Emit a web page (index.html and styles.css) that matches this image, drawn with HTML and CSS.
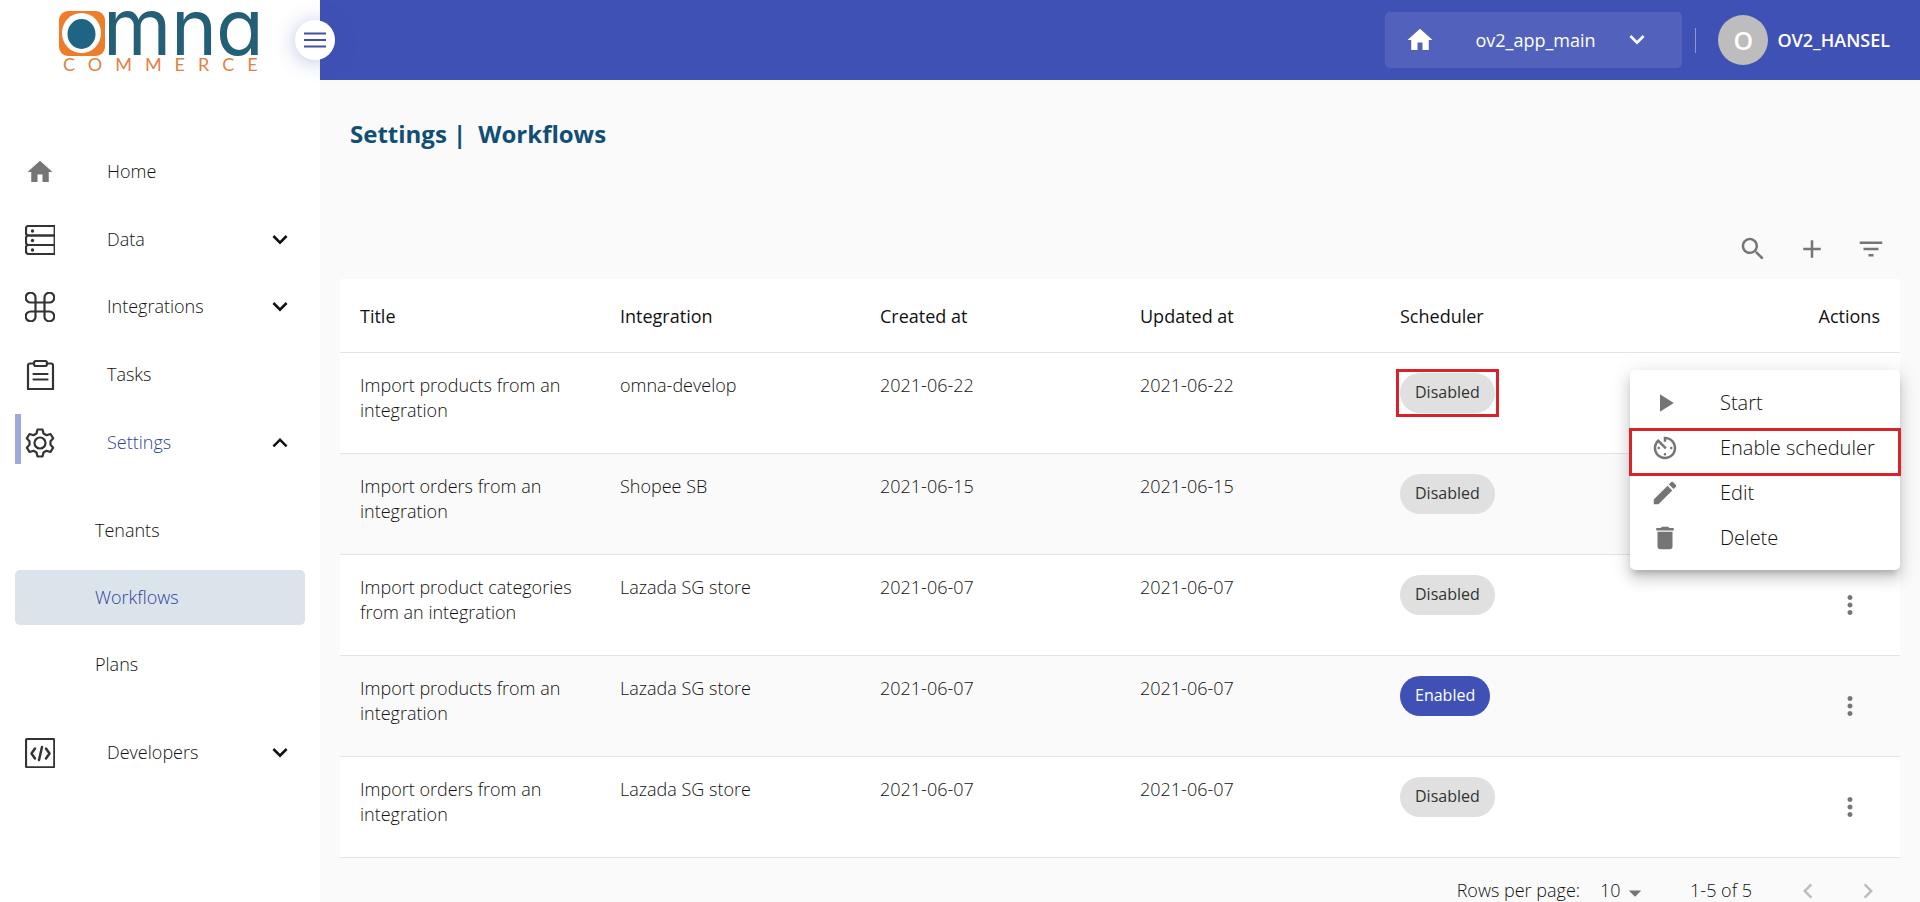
FILE: index.html
```html
<!DOCTYPE html>
<html lang="en">
<head>
<meta charset="utf-8">
<title>Settings | Workflows</title>
<link rel="stylesheet" href="styles.css">
</head>
<body>
<svg class="sprite" aria-hidden="true">
  <symbol id="home" viewBox="0 0 24 24"><path d="M10 20v-6h4v6h5v-8h3L12 3 2 12h3v8z"/></symbol>
  <symbol id="down" viewBox="0 0 24 24"><path d="M7.41 8.09 12 12.67l4.59-4.58L18 9.5l-6 6-6-6z"/></symbol>
  <symbol id="up" viewBox="0 0 24 24"><path d="M7.41 15.41 12 10.83l4.59 4.58L18 14l-6-6-6 6z"/></symbol>
  <symbol id="more" viewBox="0 0 24 24"><path d="M12 8c1.100 0 2-.9 2-2s-.9-2-2-2-2 .9-2 2 .9 2 2 2zm0 2c-1.100 0-2 .9-2 2s.9 2 2 2 2-.9 2-2-.9-2-2-2zm0 6c-1.100 0-2 .9-2 2s.9 2 2 2 2-.9 2-2-.9-2-2-2z"/></symbol>
</svg>
<div class="app">
  <aside class="sidebar">
    <div class="brand">
      <svg class="logo" viewBox="0 0 202 62" role="img" aria-label="omna commerce">
        <rect x="0" y="1" width="46" height="45" rx="9" fill="#ee7d2b"/>
        <ellipse cx="22.500" cy="23" rx="19.500" ry="20" fill="#fff"/>
        <ellipse cx="22.500" cy="24" rx="14" ry="15" fill="#1f6583"/>
        <text class="logo-name" x="44 112 157" y="45">mna</text>
        <text class="logo-sub" x="4" y="61">COMMERCE</text>
      </svg>
    </div>
    <nav class="nav">
      <a class="nav-item" href="#"><svg class="icon muted"><use href="#home"/></svg><span>Home</span></a>
      <button class="nav-item" type="button">
        <svg class="icon line" viewBox="0 0 30 30"><rect x="1" y="1" width="30" height="9.500" rx="2.500"/><rect x="1" y="10.500" width="30" height="9.500" rx="2.500"/><rect x="1" y="20" width="30" height="9" rx="2.500"/><path d="M29.300 2v27" stroke-width="1.400"/><g class="dot"><circle cx="7.500" cy="6" r="1.700"/><circle cx="7.500" cy="15.500" r="1.700"/><circle cx="7.500" cy="25" r="1.700"/></g></svg>
        <span>Data</span><svg class="icon chevron"><use href="#down"/></svg></button>
      <button class="nav-item" type="button">
        <svg class="icon line" viewBox="0 0 30 30"><path d="M10.500 10.500H6A4.900 4.900 0 1 1 10.500 6v18A4.900 4.900 0 1 1 6 19.500h18.500a4.900 4.900 0 1 1-5 4.500V6a4.900 4.900 0 1 1 5 4.500z"/></svg>
        <span>Integrations</span><svg class="icon chevron"><use href="#down"/></svg></button>
      <a class="nav-item" href="#">
        <svg class="icon line" viewBox="0 0 30 30"><path d="M9 3.500H5a2 2 0 0 0-2 2V29h25V5.500a2 2 0 0 0-2-2h-4"/><rect x="9" y="1" width="13" height="5" rx="2"/><path d="M8.500 14h14M8.500 19.500h14"/></svg>
        <span>Tasks</span></a>
      <button class="nav-item current" type="button">
        <svg class="icon line" viewBox="0 0 30 30"><path d="M12.500 1.500h5l1 4 3 1.700 4-1.200 2.700 4.300-2.700 3v3.400l2.700 3-2.700 4.300-4-1.200-3 1.700-1 4h-5l-1-4-3-1.700-4 1.200-2.700-4.300 2.700-3v-3.400l-2.700-3L4.500 6l4 1.200 3-1.700z"/><circle cx="15" cy="15" r="5.500"/></svg>
        <span>Settings</span><svg class="icon chevron"><use href="#up"/></svg></button>
      <div class="subnav">
        <a class="sub-item" href="#">Tenants</a>
        <a class="sub-item selected" href="#">Workflows</a>
        <a class="sub-item" href="#">Plans</a>
      </div>
      <button class="nav-item" type="button">
        <svg class="icon line" viewBox="0 0 30 30"><rect x="1" y="1" width="28.300" height="28.300" rx="1.500"/><path stroke-width="2.500" d="M10 10.500 6.500 15.500l3.500 5M21 10.500l3.500 5-3.500 5M17 9l-3 13"/></svg>
        <span>Developers</span><svg class="icon chevron"><use href="#down"/></svg></button>
    </nav>
    <button class="menu-toggle" type="button" aria-label="Toggle menu"><svg viewBox="0 0 24 18"><path d="M1 2.500h22M1 9h22M1 15.500h22"/></svg></button>
  </aside>
  <div class="page">
    <header class="topbar">
      <button class="app-select" type="button"><svg class="icon"><use href="#home"/></svg><span class="app-name">ov2_app_main</span><svg class="icon"><use href="#down"/></svg></button>
      <div class="divider"></div>
      <div class="user"><span class="avatar">O</span><span>OV2_HANSEL</span></div>
    </header>
    <main class="content">
      <h1 class="title"><span>Settings |</span><span>Workflows</span></h1>
      <div class="toolbar">
        <button class="icon-button" type="button" aria-label="Search"><svg class="icon" viewBox="0 0 24 24"><path d="M15.500 14h-.79l-.28-.27C15.410 12.590 16 11.110 16 9.500 16 5.910 13.090 3 9.500 3S3 5.910 3 9.500 5.910 16 9.500 16c1.610 0 3.090-.59 4.230-1.570l.27.28v.79l5 4.990L20.490 19l-4.990-5zm-6 0C7.010 14 5 11.990 5 9.500S7.010 5 9.500 5 14 7.010 14 9.500 11.990 14 9.500 14z"/></svg></button>
        <button class="icon-button" type="button" aria-label="Add"><svg class="icon" viewBox="0 0 24 24"><path d="M19 13h-6v6h-2v-6H5v-2h6V5h2v6h6v2z"/></svg></button>
        <button class="icon-button" type="button" aria-label="Filter"><svg class="icon" viewBox="0 0 24 24"><path d="M10 18h4v-2h-4v2zM3 6v2h18V6H3zm3 7h12v-2H6v2z"/></svg></button>
      </div>
      <table class="table">
        <thead><tr><th>Title</th><th>Integration</th><th>Created at</th><th>Updated at</th><th>Scheduler</th><th class="end">Actions</th></tr></thead>
        <tbody>
          <tr><td>Import products from an integration</td><td>omna-develop</td><td>2021-06-22</td><td>2021-06-22</td><td><span class="chip marked">Disabled</span></td>
            <td class="end"><div class="actions"><button class="more-button" type="button" aria-label="Actions"><svg class="icon"><use href="#more"/></svg></button>
              <div class="menu" role="menu">
                <button class="menu-item" type="button" role="menuitem"><svg class="icon" viewBox="0 0 24 24"><path d="M8 5v14l11-7z"/></svg>Start</button>
                <button class="menu-item marked" type="button" role="menuitem"><svg class="icon" viewBox="0 0 24 24"><path d="M11 17c0 .55.45 1 1 1s1-.45 1-1-.45-1-1-1-1 .45-1 1zm0-14v4h2V5.080c3.390.49 6 3.390 6 6.920 0 3.870-3.130 7-7 7s-7-3.130-7-7c0-1.680.59-3.220 1.580-4.420L12 13l1.410-1.410-6.800-6.800v.02C4.420 6.450 3 9.050 3 12c0 4.970 4.020 9 9 9 4.970 0 9-4.030 9-9s-4.030-9-9-9h-1zm7 9c0-.55-.45-1-1-1s-1 .45-1 1 .45 1 1 1 1-.45 1-1zM6 12c0 .55.45 1 1 1s1-.45 1-1-.45-1-1-1-1 .45-1 1z"/></svg>Enable scheduler</button>
                <button class="menu-item" type="button" role="menuitem"><svg class="icon" viewBox="0 0 24 24"><path d="M3 17.250V21h3.750L17.810 9.940l-3.750-3.750L3 17.250zM20.710 7.040c.39-.39.39-1.020 0-1.410l-2.340-2.340c-.39-.39-1.020-.39-1.410 0l-1.830 1.830 3.750 3.750 1.830-1.830z"/></svg>Edit</button>
                <button class="menu-item" type="button" role="menuitem"><svg class="icon" viewBox="0 0 24 24"><path d="M6 19c0 1.100.9 2 2 2h8c1.100 0 2-.9 2-2V7H6v12zM19 4h-3.500l-1-1h-5l-1 1H5v2h14V4z"/></svg>Delete</button>
              </div></div></td></tr>
          <tr><td>Import orders from an integration</td><td>Shopee SB</td><td>2021-06-15</td><td>2021-06-15</td><td><span class="chip">Disabled</span></td><td class="end"><button class="more-button" type="button" aria-label="Actions"><svg class="icon"><use href="#more"/></svg></button></td></tr>
          <tr><td>Import product categories from an integration</td><td>Lazada SG store</td><td>2021-06-07</td><td>2021-06-07</td><td><span class="chip">Disabled</span></td><td class="end"><button class="more-button" type="button" aria-label="Actions"><svg class="icon"><use href="#more"/></svg></button></td></tr>
          <tr><td>Import products from an integration</td><td>Lazada SG store</td><td>2021-06-07</td><td>2021-06-07</td><td><span class="chip on">Enabled</span></td><td class="end"><button class="more-button" type="button" aria-label="Actions"><svg class="icon"><use href="#more"/></svg></button></td></tr>
          <tr><td>Import orders from an integration</td><td>Lazada SG store</td><td>2021-06-07</td><td>2021-06-07</td><td><span class="chip">Disabled</span></td><td class="end"><button class="more-button" type="button" aria-label="Actions"><svg class="icon"><use href="#more"/></svg></button></td></tr>
        </tbody>
      </table>
      <div class="pagination">
        <label for="rows">Rows per page:</label>
        <div class="rows"><select id="rows"><option>10</option><option>25</option></select><svg class="icon caret" viewBox="0 0 24 24"><path d="M7 10l5 5 5-5z"/></svg></div>
        <span class="range">1-5 of 5</span>
        <button class="pager" type="button" disabled aria-label="Previous page"><svg class="icon" viewBox="0 0 24 24"><path d="M15.410 7.410 14 6l-6 6 6 6 1.410-1.410L10.830 12z"/></svg></button>
        <button class="pager" type="button" disabled aria-label="Next page"><svg class="icon" viewBox="0 0 24 24"><path d="M10 6 8.590 7.410 13.170 12l-4.580 4.590L10 18l6-6z"/></svg></button>
      </div>
    </main>
  </div>
</div>
</body>
</html>
```
FILE: styles.css
```css
* { box-sizing: border-box; }
body {
  margin: 0;
  font: 300 18px/25px "Open Sans", "Noto Sans", sans-serif;
  color: #111;
  background: #fafafa;
}
button, select { font: inherit; color: inherit; border: 0; background: none; padding: 0; margin: 0; cursor: pointer; }
a { color: inherit; text-decoration: none; }
.sprite { display: none; }
.icon { width: 30px; height: 30px; flex: none; fill: currentColor; }
.app { display: flex; height: 100vh; overflow: hidden; }

.sidebar { position: relative; width: 320px; flex: none; background: #fff; }
.brand { height: 137px; padding: 10px 59px; }
.logo { display: block; width: 202px; height: 62px; overflow: visible; }
.logo-name { font: 400 78px "Inter", sans-serif; font-feature-settings: "cv11", "ss01"; fill: #245f78; }
.logo-sub { font: 400 18px "Lato", sans-serif; letter-spacing: 13px; fill: #e0823f; }
.menu-toggle {
  position: absolute; top: 20px; right: -15px; z-index: 1;
  display: grid; place-items: center;
  width: 40px; height: 40px; border-radius: 50%;
  background: #fff; box-shadow: 0 2px 20px rgba(63, 81, 181, .35);
}
.menu-toggle svg { width: 24px; height: 18px; fill: none; stroke: #4351a0; stroke-width: 2; }

.nav-item {
  display: flex; align-items: center;
  width: 100%; height: 67px; padding: 0 25px 0 19px;
  border-left: 6px solid transparent; text-align: left;
}
a.nav-item { height: 69px; }
.nav-item span { flex: 1; margin-left: 52px; }
.muted { color: #757575; }
.line { fill: none; stroke: #333; stroke-width: 2.2; stroke-linecap: round; stroke-linejoin: round; }
.dot { fill: #333; stroke: none; }
.current { position: relative; color: #303f9f; }
.current::before { content: ""; position: absolute; left: 9px; top: 5px; width: 6px; height: 50px; background: #9fa8da; }
.chevron { color: #111; }
.subnav { display: grid; gap: 12px; padding: 27px 15px 27px; }
.sub-item { padding: 15px 80px; border-radius: 5px; }
.selected { color: #303f9f; background: #dce4eb; }

.page { flex: 1; min-width: 0; }
.topbar {
  display: flex; align-items: center; justify-content: flex-end;
  height: 80px; padding: 0 30px 0 0;
  color: #fff; background: #3f51b5;
}
.app-select { display: flex; align-items: center; width: 297px; height: 56px; padding: 0 30px 0 20px; border-radius: 5px; background: rgba(255, 255, 255, .1); font-weight: 400; }
.app-name { flex: 1; text-align: left; padding-left: 40px; }
.divider { width: 1px; height: 25px; margin: 0 22px 0 13px; background: rgba(255, 255, 255, .4); }
.user { display: flex; align-items: center; gap: 9px; font-weight: 600; }
.avatar { display: grid; place-items: center; width: 50px; height: 50px; border-radius: 50%; background: #bdbdbd; font-size: 25px; }

.content { padding: 34px 20px 0; }
.title { display: flex; gap: 12px; margin: 0; padding: 0 10px; font-size: 24px; line-height: 40px; font-weight: 700; color: #114e75; }
.toolbar { display: flex; justify-content: flex-end; margin-top: 65px; color: #757575; }
.icon-button { display: grid; place-items: center; width: 59px; height: 60px; }
.table { width: 100%; table-layout: fixed; border-collapse: separate; border-spacing: 0; background: #fff; }
th, td { border-bottom: 1px solid #e4e4e8; text-align: left; vertical-align: top; padding: 20px; }
th { height: 74px; padding: 2px 20px 0; vertical-align: middle; font-weight: 500; }
tbody tr:nth-child(even) { background: #fafafa; }
th.end, td.end { text-align: right; }
.chip { position: relative; display: inline-block; height: 40px; padding: 0 15px; border-radius: 20px; background: #e0e0e0; font-size: 16px; line-height: 38px; font-weight: 400; color: #333; }
.chip.on { color: #fff; background: #3f51b5; font-weight: 500; }
.chip.marked::after { content: ""; position: absolute; inset: -4px; border: 3px solid #d8232a; }
.more-button { display: inline-grid; place-items: center; width: 60px; height: 60px; vertical-align: top; color: #757575; }
.actions { position: relative; }
.menu {
  position: absolute; top: -3px; right: -20px; z-index: 1;
  width: 270px; padding: 10px 0; border-radius: 5px; background: #fff;
  box-shadow: 0 6px 6px -3px rgba(0, 0, 0, .2), 0 10px 14px 1px rgba(0, 0, 0, .1), 0 4px 18px 3px rgba(0, 0, 0, .1);
}
.menu-item { position: relative; display: flex; align-items: center; gap: 40px; width: 100%; height: 45px; padding: 0 20px; font-size: 20px; white-space: nowrap; }
.menu-item .icon { color: #757575; }
.menu-item.marked::after { content: ""; position: absolute; inset: 3px -1px -6px; border: 3px solid #d8232a; }
.pagination { display: flex; align-items: center; justify-content: flex-end; height: 65px; padding-right: 2px; }
.rows { position: relative; margin: 0 40px 0 20px; }
.rows select { display: block; width: 50px; appearance: none; }
.caret { position: absolute; right: 0; top: 0; color: #757575; pointer-events: none; }
.range { margin-right: 26px; }
.pager { display: grid; place-items: center; width: 60px; height: 60px; color: #bdbdbd; }
```
